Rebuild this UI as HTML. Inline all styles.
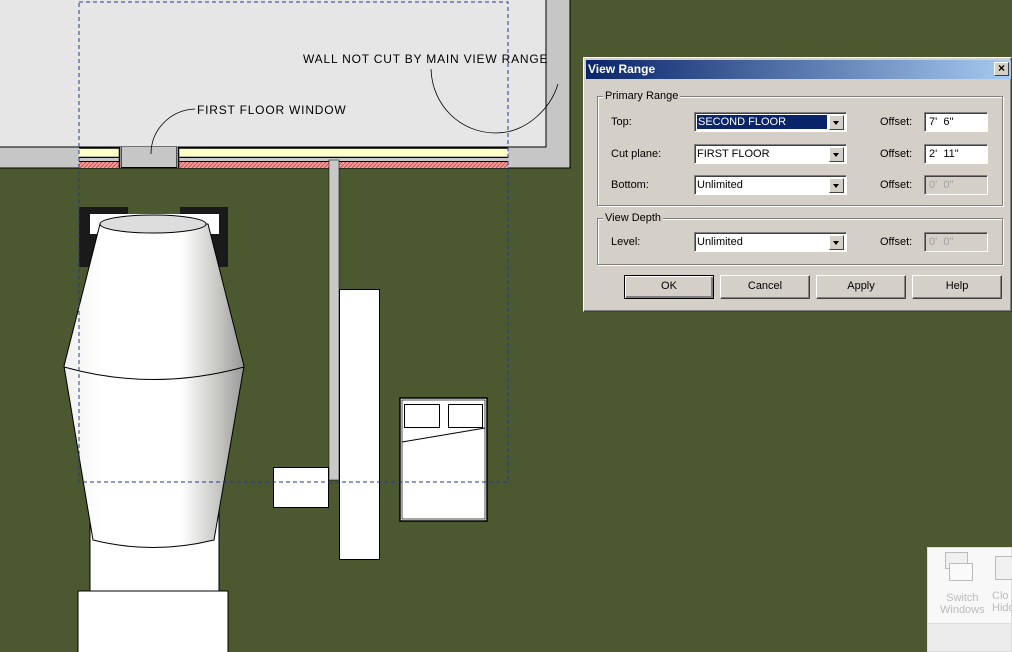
<!DOCTYPE html>
<html><head><style>
*{margin:0;padding:0;box-sizing:border-box}
body{width:1012px;height:652px;overflow:hidden;background:#4b5830;position:relative;font-family:"Liberation Sans",sans-serif}
.a{position:absolute}
.dlg{left:583px;top:57px;width:429px;height:255px;background:#d4d0c8;border:1px solid #fff;border-right-color:#404040;border-bottom-color:#404040;box-shadow:inset -1px -1px #808080}
.tb{left:2px;top:2px;right:0;height:19px;background:linear-gradient(90deg,#0a246a,#a6caf0);color:#fff;font-weight:bold;font-size:12px;padding:2px 0 0 2px}
.x{right:2px;top:2px;width:15px;height:14px;background:#d4d0c8;border:1px solid #fff;border-right-color:#404040;border-bottom-color:#404040;color:#000;font-size:12px;line-height:11px;text-align:center;font-weight:bold}
.grp{border:1px solid #808080;box-shadow:1px 1px #fff,inset 1px 1px #fff}
.lg{background:#d4d0c8;font-size:11px;padding:0 2px;color:#000}
.lb{font-size:11px;color:#000}
.cb{width:153px;height:20px;background:#fff;border:1px solid #808080;border-right-color:#fff;border-bottom-color:#fff;box-shadow:inset 1px 1px #404040;font-size:11px;padding:3px 2px}
.cb b{position:absolute;right:2px;top:2px;width:15px;height:15px;background:#d4d0c8;border:1px solid #fff;border-right-color:#404040;border-bottom-color:#404040;font-weight:normal}
.cb b:after{content:"";position:absolute;left:3px;top:5px;border:3.5px solid transparent;border-top:4px solid #000}
.tx{width:64px;height:20px;background:#fff;border:1px solid #808080;border-right-color:#fff;border-bottom-color:#fff;box-shadow:inset 1px 1px #404040;font-size:11px;padding:3px 4px}
.dis{background:#d4d0c8;color:#a0a0a0}
.bt{width:90px;height:24px;border:1px solid #fff;border-right-color:#404040;border-bottom-color:#404040;box-shadow:inset -1px -1px #808080;font-size:11px;text-align:center;line-height:21px}
</style></head><body>
<svg class="a" style="left:0;top:0" width="1012" height="652">
<defs><pattern id="h" width="4" height="4" patternUnits="userSpaceOnUse"><rect width="4" height="4" fill="#f49a9a"/><path d="M0 4L4 0" stroke="#c04040" stroke-width="0.8"/></pattern>
<linearGradient id="vg" x1="0" x2="1"><stop offset="0" stop-color="#f0f0ee"/><stop offset="0.2" stop-color="#fff"/><stop offset="0.65" stop-color="#fff"/><stop offset="0.85" stop-color="#c8c8c4"/><stop offset="1" stop-color="#999"/></linearGradient></defs>
<rect x="-1" y="-1" width="571" height="169" fill="#c6c6c6" stroke="#000"/>
<rect x="-1" y="-1" width="547" height="148" fill="#e6e6e6" stroke="#000"/>
<rect x="79" y="148" width="429" height="9" fill="#ffffc8"/>
<line x1="79" y1="148" x2="508" y2="148" stroke="#000" stroke-width="1.5"/>
<line x1="79" y1="157.5" x2="508" y2="157.5" stroke="#000" stroke-width="1.5"/>
<rect x="79" y="158" width="429" height="3" fill="#c8c8c8"/>
<line x1="79" y1="161.5" x2="508" y2="161.5" stroke="#000"/>
<rect x="79" y="162" width="429" height="6" fill="url(#h)"/>
<rect x="119" y="147" width="59" height="21" fill="#c6c6c6"/>
<line x1="119.5" y1="147" x2="119.5" y2="168" stroke="#000" stroke-width="1.5"/>
<line x1="121.5" y1="147" x2="121.5" y2="168" stroke="#000" stroke-width="0.6"/>
<line x1="176.5" y1="147" x2="176.5" y2="168" stroke="#000" stroke-width="0.6"/>
<line x1="178.5" y1="147" x2="178.5" y2="168" stroke="#000" stroke-width="1.5"/>
<line x1="121" y1="167.5" x2="177" y2="167.5" stroke="#000"/>
<rect x="329" y="160" width="10" height="320" fill="#c8c8c8" stroke="#000" stroke-width="0.5"/>
<path d="M151 154C151 130 170 110 195 109" fill="none" stroke="#000" stroke-width="0.8"/>
<path d="M431 69C432 105 460 133 496 133C525 133 550 110 558 84" fill="none" stroke="#000" stroke-width="0.8"/>
<text x="197" y="114" font-size="12" letter-spacing="0.8" font-family="Liberation Sans">FIRST FLOOR WINDOW</text>
<text x="303" y="63" font-size="12" letter-spacing="0.8" font-family="Liberation Sans">WALL NOT CUT BY MAIN VIEW RANGE</text>
<rect x="79" y="207" width="22" height="60" fill="#1a1a1a"/><rect x="79" y="207" width="49" height="24" fill="#1a1a1a"/>
<rect x="206" y="207" width="22" height="60" fill="#1a1a1a"/><rect x="180" y="207" width="48" height="24" fill="#1a1a1a"/>
<rect x="90" y="214" width="129" height="20" fill="#fff"/>
<rect x="90" y="500" width="129" height="92" fill="#fff" stroke="#000"/>
<rect x="78" y="591" width="150" height="70" fill="#fff" stroke="#000"/>
<path d="M100 224L64 366L93 540Q153 555 214 540L244 366L208 224Z" fill="url(#vg)" stroke="#000"/>
<ellipse cx="153" cy="224" rx="53" ry="9" fill="#ddd" stroke="#000"/>
<path d="M64 367Q153 392 244 367" fill="none" stroke="#000"/>
<rect x="339.5" y="289.5" width="40" height="270" fill="#fff" stroke="#000"/>
<rect x="273.5" y="467.5" width="55" height="40" fill="#fff" stroke="#000"/>
<rect x="400" y="398" width="87" height="123" fill="#fff" stroke="#000" stroke-width="1.5"/>
<rect x="402" y="400" width="83" height="119" fill="none" stroke="#000" stroke-width="0.7"/>
<rect x="404.5" y="404.5" width="35" height="23" fill="none" stroke="#000"/>
<rect x="448.5" y="404.5" width="34" height="23" fill="none" stroke="#000"/>
<line x1="402" y1="442" x2="485" y2="428" stroke="#000"/>
<rect x="79" y="2" width="429" height="480" fill="none" stroke="#203a8c" stroke-dasharray="4 3"/>
</svg>
<div class="a" style="left:927px;top:547px;width:85px;height:105px;background:#f8f8f8;border:1px solid #ddd">
<div class="a" style="left:0;right:0;bottom:0;height:28px;background:#ececec;border-top:1px solid #ddd"></div>
<div class="a" style="left:17px;top:4px;width:23px;height:17px;border:1px solid #bbb;background:#f0f0f0"></div>
<div class="a" style="left:21px;top:15px;width:24px;height:18px;border:1px solid #bbb;background:#fafafa"></div>
<div class="a" style="left:67px;top:8px;width:20px;height:24px;border:1px solid #bbb;background:#f0f0f0"></div>
<div class="a lb" style="left:12px;top:44px;color:#bbb;text-align:center;line-height:12px">Switch<br>Windows</div>
<div class="a lb" style="left:64px;top:42px;color:#bbb;line-height:12px">Clo<br>Hidd</div>
</div>
<div class="a dlg">
<div class="a tb">View Range<div class="a x">×</div></div>
<div class="a grp" style="left:13px;top:38px;width:406px;height:110px"></div>
<div class="a lg" style="left:19px;top:32px">Primary Range</div>
<div class="a lb" style="left:27px;top:58px">Top:</div>
<div class="a lb" style="left:27px;top:90px">Cut plane:</div>
<div class="a lb" style="left:27px;top:121px">Bottom:</div>
<div class="a cb" style="left:110px;top:54px;padding:0"><span style="display:block;margin:2px;width:130px;height:14px;background:#0a246a;color:#fff;padding:1px 1px">SECOND FLOOR</span><b></b></div>
<div class="a cb" style="left:110px;top:86px">FIRST FLOOR<b></b></div>
<div class="a cb" style="left:110px;top:117px">Unlimited<b></b></div>
<div class="a lb" style="left:296px;top:58px">Offset:</div>
<div class="a lb" style="left:296px;top:90px">Offset:</div>
<div class="a lb" style="left:296px;top:121px">Offset:</div>
<div class="a tx" style="left:340px;top:54px">7'&nbsp; 6"</div>
<div class="a tx" style="left:340px;top:86px">2'&nbsp; 11"</div>
<div class="a tx dis" style="left:340px;top:117px">0'&nbsp; 0"</div>
<div class="a grp" style="left:13px;top:160px;width:406px;height:47px"></div>
<div class="a lg" style="left:19px;top:154px">View Depth</div>
<div class="a lb" style="left:27px;top:178px">Level:</div>
<div class="a cb" style="left:110px;top:174px">Unlimited<b></b></div>
<div class="a lb" style="left:296px;top:178px">Offset:</div>
<div class="a tx dis" style="left:340px;top:174px">0'&nbsp; 0"</div>
<div class="a bt" style="left:40px;top:217px;border:1px solid #000;box-shadow:inset 1px 1px #fff,inset -2px -2px #808080">OK</div>
<div class="a bt" style="left:136px;top:217px">Cancel</div>
<div class="a bt" style="left:232px;top:217px">Apply</div>
<div class="a bt" style="left:328px;top:217px">Help</div>
</div>
</body></html>
